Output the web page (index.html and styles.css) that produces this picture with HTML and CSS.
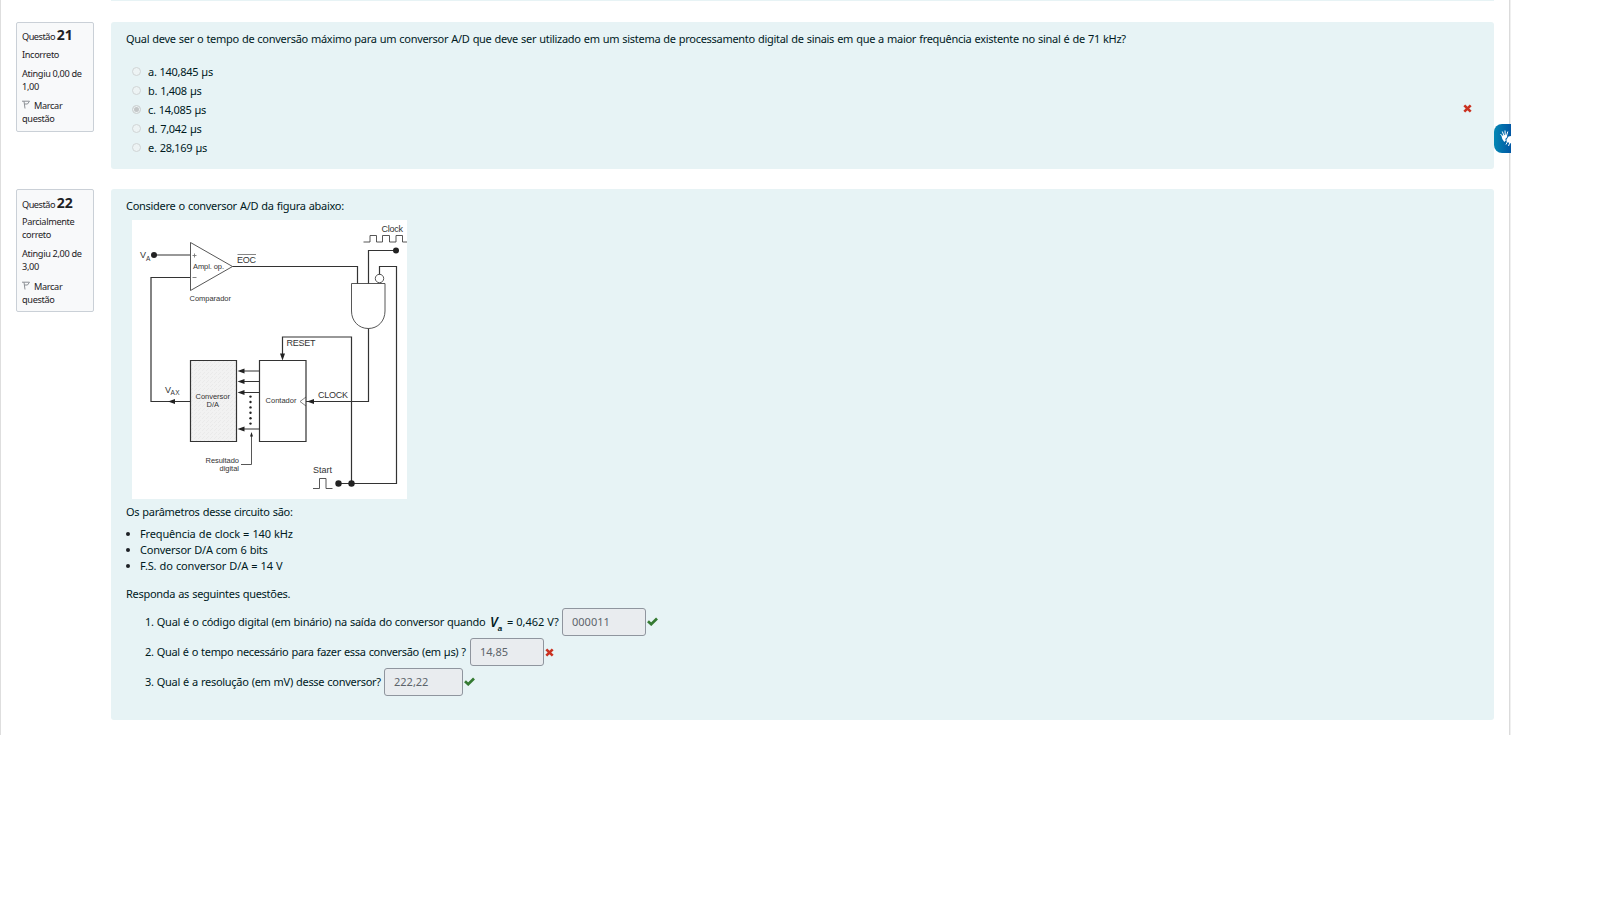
FILE: index.html
```html
<!DOCTYPE html>
<html lang="pt-br">
<head>
<meta charset="utf-8">
<title>Questionário</title>
<link rel="stylesheet" href="styles.css">
</head>
<body>
<main class="page">
  <div class="previous"></div>
  <section class="question q21">
    <aside class="info">
      <h3><span>Questão</span> <b>21</b></h3>
      <p class="state"><span>Incorreto</span></p>
      <p class="grade"><span>Atingiu 0,00 de</span><br>1,00</p>
      <p class="flag"><svg class="flag-icon" viewBox="0 0 8 9"><path d="M0 1.200h7.500L5.500 4h-3M2 1.200l1 7.300"/></svg><span>Marcar</span><br><span>questão</span></p>
    </aside>
    <div class="content">
      <p>Qual deve ser o tempo de conversão máximo para um conversor A/D que deve ser utilizado em um sistema de processamento digital de sinais em que a maior frequência existente no sinal é de 71 kHz?</p>
      <div class="answer-row">
        <ul class="options">
          <li><i class="radio"></i>a. 140,845 µs</li>
          <li><i class="radio"></i>b. 1,408 µs</li>
          <li><i class="radio checked"></i>c. 14,085 µs</li>
          <li><i class="radio"></i>d. 7,042 µs</li>
          <li><i class="radio"></i>e. 28,169 µs</li>
        </ul>
        <svg class="cross" viewBox="0 0 9 9"><path d="M1.300 1.300 7.700 7.700M7.700 1.300 1.300 7.700"/></svg>
      </div>
    </div>
  </section>
  <section class="question q22">
    <aside class="info">
      <h3><span>Questão</span> <b>22</b></h3>
      <p class="state"><span>Parcialmente</span><br><span>correto</span></p>
      <p class="grade"><span>Atingiu 2,00 de</span><br>3,00</p>
      <p class="flag"><svg class="flag-icon" viewBox="0 0 8 9"><path d="M0 1.200h7.500L5.500 4h-3M2 1.200l1 7.300"/></svg><span>Marcar</span><br><span>questão</span></p>
    </aside>
    <div class="content">
      <p>Considere o conversor A/D da figura abaixo:</p>
      <svg class="circuit" viewBox="132 220 275 279">
        <defs>
          <pattern id="grain" width="4" height="4" patternUnits="userSpaceOnUse"><rect width="4" height="4" fill="#f2f2f2"/><path d="M0 0h1v1H0zM2 2h1v1H2zM3 1h1v1H3z" fill="#eaeaea"/></pattern>
        </defs>
        <rect x="132" y="220" width="275" height="279" fill="#fff"/>
        <g class="thin">
          <path d="M190.500 242.500v48l42-24z"/>
          <path d="M363.500 242h6.500v-6.500h6.500v6.500h6v-6.500h7v6.500h6.500v-6.500h6.500v6.500h5"/>
          <circle cx="379.500" cy="278.500" r="4.200"/>
          <path d="M313 488.500h6.500v-10h6.500v10h6.500"/>
          <path d="M241 464.500h10.500V436"/>
          <path class="light" d="M192.500 255.500h4M194.500 253.500v4M192.500 277.500h4M237.500 254.500H256M306 397l-6 4.500 6 4.500"/>
          <path d="M351.500 283.500H385V311c0 10-7 17.500-16.700 17.500S351.500 321 351.500 311z"/>
        </g>
        <g class="wire">
          <path d="M154 255h36M190 277.500h-39V401.500H190"/>
          <path d="M232.500 266.500h125v17M396 250.500h-27.500v33M379.500 274.500v-8h17v217H338"/>
          <path d="M368.500 328.500v73H306M282.500 355v-18h69v146.500"/>
          <path d="M259.500 371H240M259.500 381.500H240M259.500 392.500H240M259.500 429H240"/>
          <path d="M259.500 360.500h46.500v81h-46.500z"/>
          <path d="M190.500 360.500h46v81h-46z" fill="url(#grain)"/>
        </g>
        <g class="solid">
          <circle cx="154" cy="255" r="3"/><circle cx="396" cy="250.500" r="3"/>
          <circle cx="338.500" cy="483.500" r="3.200"/><circle cx="351.500" cy="483.500" r="3.200"/>
          <path d="M168 401.500l7-2.500v5zM282.500 360.500l-2.500-7h5zM307 401.500l7-2.500v5zM251.500 432l-1.500 4.500h3z"/>
          <path d="M237.500 371l7-2.500v5zM237.500 381.500l7-2.500v5zM237.500 392.500l7-2.500v5zM237.500 429l7-2.500v5z"/>
          <circle cx="250.500" cy="396.600" r="1.200"/><circle cx="250.500" cy="402" r="1.200"/><circle cx="250.500" cy="407.400" r="1.200"/><circle cx="250.500" cy="412.800" r="1.200"/><circle cx="250.500" cy="418.200" r="1.200"/><circle cx="250.500" cy="423.600" r="1.200"/>
        </g>
        <g class="big">
          <text x="381.500" y="232" textLength="21.500">Clock</text>
          <text x="140" y="258">V</text><text x="146" y="260.500" class="sub">A</text>
          <text x="237" y="262.500" textLength="19">EOC</text>
          <text x="286.500" y="346" textLength="29">RESET</text>
          <text x="318" y="398" textLength="30">CLOCK</text>
          <text x="165" y="393">V</text><text x="170.500" y="395" class="sub" textLength="9">AX</text>
          <text x="313" y="472.500" textLength="19">Start</text>
        </g>
        <g class="small">
          <text x="193" y="268.500" textLength="31">Ampl. op.</text>
          <text x="189.500" y="300.500" textLength="41.500">Comparador</text>
          <text x="195.500" y="398.500" textLength="34.500">Conversor</text>
          <text x="206.500" y="406.500" textLength="12.500">D/A</text>
          <text x="265.500" y="403" textLength="31">Contador</text>
          <text x="205.500" y="462.500" textLength="33.500">Resultado</text>
          <text x="219.500" y="471" textLength="19.500">digital</text>
        </g>
      </svg>
      <p>Os parâmetros desse circuito são:</p>
      <ul class="params">
        <li><span>Frequência de clock = 140 kHz</span></li>
        <li><span class="tight">Conversor D/A com 6 bits</span></li>
        <li><span>F.S. do conversor D/A = 14 V</span></li>
      </ul>
      <p>Responda as seguintes questões.</p>
      <div class="tasks">
        <div class="task"><span class="t1">1. Qual é o código digital (em binário) na saída do conversor quando</span><b class="va">V<sub>a</sub></b><span class="t1b">= 0,462 V?</span><span class="field f1">000011</span><svg class="check" viewBox="0 0 11 9"><path d="M1 4.200 4.200 7.200 10 1.500"/></svg></div>
        <div class="task"><span class="t2">2. Qual é o tempo necessário para fazer essa conversão (em µs) ?</span><span class="field f2">14,85</span><svg class="cross" viewBox="0 0 9 9"><path d="M1.300 1.300 7.700 7.700M7.700 1.300 1.300 7.700"/></svg></div>
        <div class="task"><span class="t3">3. Qual é a resolução (em mV) desse conversor?</span><span class="field f3">222,22</span><svg class="check" viewBox="0 0 11 9"><path d="M1 4.200 4.200 7.200 10 1.500"/></svg></div>
      </div>
    </div>
  </section>
  <div class="vlibras"><svg viewBox="0 0 17 29"><path d="M6.500 10l2.500 3M8.300 7.500l1.700 4.500M11 6.500l.3 5M13.800 7.500l-1.300 4.500M12 20.500l1.800-3.500M14.500 22l1.500-4"/><path class="palm" d="M7.500 12l5-1.500.8 2.500-2 2 .5 1.500-1.500 1.500-2-3zM12.500 15.500l2-3 2.500-.5v7.500l-2.500-1-2-1z"/></svg></div>
</main>
</body>
</html>
```
FILE: styles.css
```css
* { box-sizing: border-box; }
body { margin: 0; background: #fff; color: #1d2125; font: 11px/16px "Noto Sans", "Open Sans", sans-serif; }
p, h3, ul { margin: 0; padding: 0; list-style: none; font-weight: 400; }
.page { position: relative; width: 1511px; height: 735px; border-left: 1px solid #dedede; border-right: 1px solid #f0f0f0; box-shadow: inset -1px 0 #dbdbdb; padding: 0 16px 0 15px; }
.previous { height: 1px; margin-left: 95px; background: #e7f3f5; }
.question { display: flex; justify-content: space-between; align-items: flex-start; }
.q21 { margin-top: 21px; }
.q22 { margin-top: 20px; }
.info { width: 78px; border: 1px solid #cad0d7; border-radius: 2px; background: #f8f9fa; padding: 3px 5px 0; font-size: 9.200px; line-height: 13px; letter-spacing: -.35px; white-space: nowrap; }
.q21 .info { height: 110px; }
.q22 .info { height: 123px; padding-top: 4px; }
.info h3 { font-size: 9.200px; line-height: 17px; letter-spacing: -.5px; }
.info h3 b { font-size: 14px; letter-spacing: -.2px; }
.info p { margin-top: 6px; }
.q21 .info .state { margin-top: 3px; }
.q22 .info .state { margin-top: 2px; }
.q22 .info .flag { margin-top: 7px; }
.flag-icon { width: 8px; height: 9px; margin-right: 4px; fill: none; stroke: #8b8f94; stroke-width: 1; }
.content { width: 1383px; border-radius: 3px; background: #e7f3f5; color: #001a1e; padding: 9px 15px 0; letter-spacing: -.29px; word-spacing: .5px; }
.q21 .content { height: 147px; }
.q22 .content { height: 531px; }
.answer-row { display: flex; justify-content: space-between; align-items: center; padding: 15px 7px 0 6px; }
.answer-row .cross { margin-bottom: 3px; }
.options li { display: flex; align-items: center; height: 19px; gap: 7px; }
.radio { width: 9px; height: 9px; border: 1px solid #d0d5d6; border-radius: 50%; background: #edf3f4; }
.radio.checked { background: #c3c6c7; box-shadow: inset 0 0 0 1px #edf3f4; }
.cross { width: 9px; height: 9px; fill: none; stroke: #ca3120; stroke-width: 2.600; }
.check { width: 11px; height: 9px; margin-bottom: 1px; fill: none; stroke: #357a32; stroke-width: 2.700; }
.circuit { display: block; width: 275px; height: 279px; margin: 6px 0 5px 6px; letter-spacing: 0; word-spacing: 0; }
.thin { fill: none; stroke: #444; stroke-width: .9; }
.light { stroke: #777; }
.wire { fill: none; stroke: #333; stroke-width: 1.200; }
.solid { fill: #222; }
.big, .small { font-family: "Liberation Sans", Arial, sans-serif; fill: #333; }
.big { font-size: 9px; }
.small { font-size: 7.500px; }
.sub { font-size: 6.500px; }
.params { padding: 6px 0 12px 15px; letter-spacing: -.15px; }
.params .tight { letter-spacing: -.23px; }
.params li { display: flex; align-items: center; height: 16px; }
.params li::before { content: ""; width: 4px; height: 4px; margin: 0 10px 0 -15px; border-radius: 50%; background: #1d2125; }
.tasks { display: grid; gap: 2px; padding: 6px 0 0 19px; }
.task { display: flex; align-items: center; height: 28px; white-space: nowrap; }
.field { height: 28px; border: 1px solid #8f959e; border-radius: 3px; background: #e9ecef; color: #5d646b; padding: 5px 9px; margin-right: 1px; letter-spacing: 0; }
.t1 { width: 345px; letter-spacing: -.27px; }
.va { width: 17px; font-size: 13.500px; font-weight: 600; font-style: italic; letter-spacing: 0; }
.va sub { font-family: "Liberation Sans", Arial, sans-serif; font-size: 8px; line-height: 0; }
.t1b { width: 55px; letter-spacing: 0; word-spacing: 0; }
.t2 { width: 325px; letter-spacing: -.32px; }
.t3 { width: 239px; }
.f1 { width: 84px; }
.f2 { width: 74px; }
.f3 { width: 79px; }
.vlibras { position: absolute; right: -1px; top: 124px; width: 17px; height: 29px; border-radius: 8px 0 0 8px; background: linear-gradient(90deg, #0387b4, #0257a4); }
.vlibras svg { display: block; width: 17px; height: 29px; fill: none; stroke: #fff; stroke-width: 1; }
.vlibras .palm { fill: #fff; stroke: none; }
```
